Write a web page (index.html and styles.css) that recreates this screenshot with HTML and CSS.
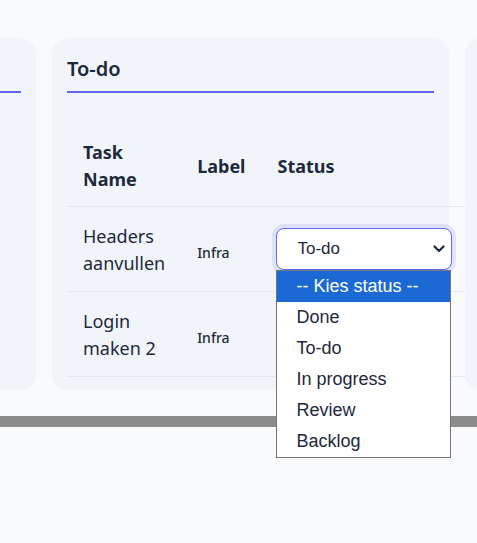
FILE: index.html
```html
<!DOCTYPE html>
<html lang="nl">
<head>
<meta charset="utf-8">
<title>Board</title>
<link rel="stylesheet" href="styles.css">
</head>
<body>
<div class="page">
  <div class="board">
    <section class="card">
      <div class="card-title card-title-empty"></div>
    </section>
    <section class="card">
      <h2 class="card-title">To-do</h2>
      <table class="tasks">
        <thead>
          <tr>
            <th class="col-name">Task Name</th>
            <th class="col-label">Label</th>
            <th class="col-status">Status</th>
          </tr>
        </thead>
        <tbody>
          <tr>
            <td class="cell-name">Headers aanvullen</td>
            <td class="cell-label">Infra</td>
            <td class="cell-status">
              <div class="select-wrap">
                <div class="select is-open">
                  <span class="select-value">To-do</span>
                  <svg class="chevron" width="12" height="8" viewBox="0 0 12 8" aria-hidden="true"><path d="M1.5 1.5 L6 6 L10.5 1.5" fill="none" stroke="#1e293b" stroke-width="2.2" stroke-linecap="round" stroke-linejoin="round"/></svg>
                </div>
                <ul class="dropdown">
                  <li class="option is-active">-- Kies status --</li>
                  <li class="option">Done</li>
                  <li class="option">To-do</li>
                  <li class="option">In progress</li>
                  <li class="option">Review</li>
                  <li class="option">Backlog</li>
                </ul>
              </div>
            </td>
          </tr>
          <tr>
            <td class="cell-name">Login maken 2</td>
            <td class="cell-label">Infra</td>
            <td class="cell-status"></td>
          </tr>
        </tbody>
      </table>
    </section>
    <section class="card">
      <div class="card-title card-title-empty"></div>
    </section>
  </div>
  <div class="scrollbar"></div>
</div>
</body>
</html>
```

FILE: styles.css
```css
* { box-sizing: border-box; }

html, body {
  margin: 0;
  padding: 0;
  background: #f8fafc;
  font-family: "Noto Sans", "Open Sans", sans-serif;
  color: #1e293b;
  overflow: hidden;
}

.page {
  width: 477px;
  height: 543px;
  overflow: hidden;
}

.board {
  display: flex;
  gap: 16px;
  padding-top: 38px;
  margin-left: -361px;
  align-items: flex-start;
}

.card {
  flex: 0 0 397px;
  min-width: 0;
  height: 352px;
  background: #f1f5f9;
  border-radius: 16px;
  padding: 17px 15px 13px 15px;
  position: relative;
}

.card-title {
  margin: 0;
  height: 38px;
  font-size: 20px;
  line-height: 28px;
  font-weight: 600;
  color: #1e293b;
  padding-bottom: 8px;
  border-bottom: 2px solid #6366f1;
}

.tasks {
  margin-top: 31px;
  border-collapse: collapse;
  font-size: 18px;
  line-height: 27px;
}

.tasks tr {
  border-bottom: 1px solid #e2e8f0;
}

.tasks th {
  text-align: left;
  font-weight: 700;
  padding: 15px 16px 13px 16px;
  vertical-align: middle;
}

.tasks td {
  padding: 16px 16px 14px 16px;
  vertical-align: middle;
}

.tasks td.cell-label {
  padding-top: 18px;
  padding-bottom: 12px;
}

.tasks td.cell-status {
  padding-left: 14px;
}

.col-name { width: 114px; }
.col-label { width: 80px; }
.col-status { width: 208px; }

.cell-label {
  font-size: 14px;
  font-weight: 500;
}

.select-wrap {
  position: relative;
  width: 176px;
  margin-top: -3px;
}

.select {
  height: 42px;
  display: flex;
  align-items: center;
  justify-content: space-between;
  padding: 0 6px 0 21px;
  background: #ffffff;
  border: 1px solid #6366f1;
  border-radius: 8px;
  box-shadow: 0 0 0 4px rgba(99, 102, 241, 0.14);
  font-family: "Liberation Sans", Arial, sans-serif;
  font-size: 17px;
  color: #1e293b;
}

.chevron { display: block; }

.dropdown {
  position: absolute;
  top: 42px;
  left: 0;
  width: 175px;
  margin: 0;
  padding: 0;
  list-style: none;
  background: #ffffff;
  border: 1px solid #767676;
  font-family: "Liberation Sans", Arial, sans-serif;
  font-size: 18px;
  color: #1e293b;
  z-index: 10;
}

.option {
  height: 31px;
  line-height: 31px;
  padding-left: 20px;
  white-space: nowrap;
}

.option.is-active {
  background: #1a69d4;
  color: #ffffff;
}

.scrollbar {
  margin-top: 26px;
  height: 11px;
  background: #8c8c8c;
}
```
